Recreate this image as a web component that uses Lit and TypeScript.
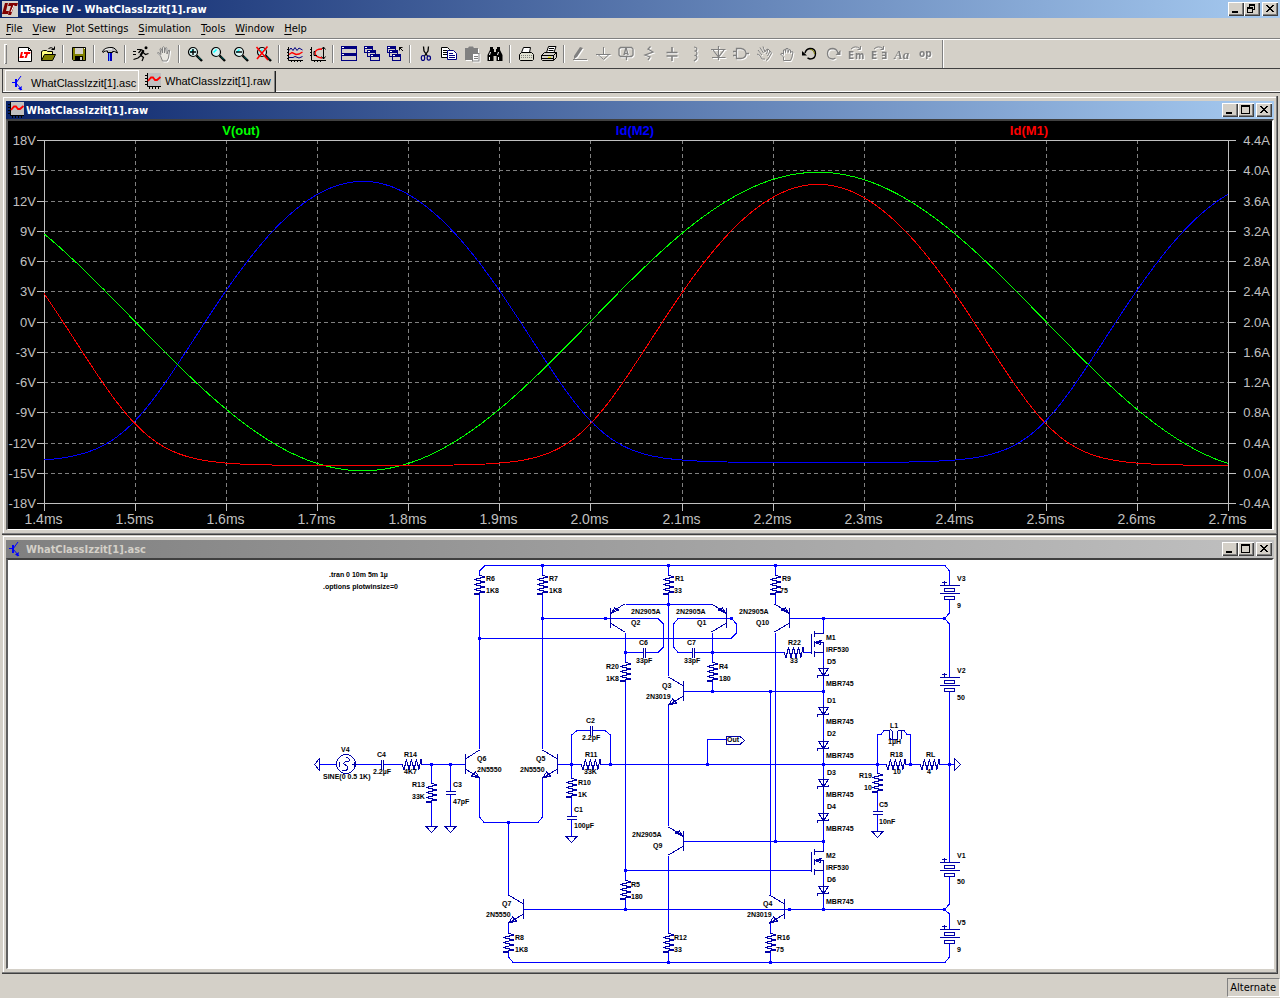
import { LitElement, html, svg, css, SVGTemplateResult } from "lit";
import { customElement, property } from "lit/decorators.js";
import { classMap } from "lit/directives/class-map.js";

type Pic = SVGTemplateResult;

/* ---------- icons, drawn on a 16 x 16 grid ---------- */

const lens = (extra: Pic) => svg`
  <circle cx="6" cy="6" r="4.5" fill="#d8f4f4" stroke="#000" stroke-width="1.2"/>
  <path d="M3.5 6.5 L6.5 3.5" stroke="#0ff" stroke-width="1.4" fill="none"/>
  <path d="M9.5 9.5 L15 15" stroke="#000" stroke-width="2.4" fill="none"/>
  <path d="M11 10.5 L14 13.5" stroke="#008080" stroke-width="1" fill="none"/>
  ${extra}`;

const pane = (x: number, y: number, w: number, h: number) => svg`
  <rect x=${x} y=${y} width=${w} height=${h} fill="#000080"/>
  <rect x=${x + 1} y=${y + 3} width=${w - 2} height=${h - 4} fill="#d4d0c8"/>
  <rect x=${x + 1} y=${y + 1} width="2" height="1" fill="#fff"/>`;

const ICONS: Record<string, Pic> = {
  lt: svg`
    <rect width="16" height="16" fill="#d4d0c8"/>
    <path d="M3 2 H6 L4 10 H7 L6 13 H0 Z M7 2 H16 L15 5 H12 L9 14 H6 L9 5 H6 Z" fill="#800000"/>
    <path d="M9 11 L12 4" stroke="#fff" fill="none"/>`,
  bjt: svg`
    <path d="M1 7.500 H5 M5 8 L10 1 M5 8 L11 15" stroke="#00f" stroke-width="1" fill="none"/>
    <path d="M10 15.500 L11 11 L7 13.500 Z M4 4 h2 v8 h-2 z" fill="#00f"/>`,
  wave: svg`
    <rect x="2" width="14" height="13" fill="#c0c0c0"/>
    <path d="M2.500 0 V13.500 H16 M0 2.500 h2 M0 5.500 h2 M0 8.500 h2 M0 11.500 h2 M4.500 14 v2 M7.500 14 v2 M10.500 14 v2 M13.500 14 v2" stroke="#000" fill="none"/>
    <path d="M3 8 L6 4.500 H8 L10 7 H12 L15.500 4" stroke="#f00" stroke-width="1.800" fill="none"/>`,
  fresh: svg`
    <path d="M1.500 1.500 H11.500 L14.500 4.500 V15.500 H1.500 Z" fill="#fff" stroke="#000"/>
    <path d="M11.500 1.500 V4.500 H14.500" fill="none" stroke="#000"/>
    <path d="M4 6 H6 L5 10 H7 L6.500 12 H2.500 Z M7 6 H13.500 L13 8 H11 L9.500 12 H7.500 L9 8 H7 Z" fill="#f00"/>`,
  open: svg`
    <path d="M1.500 14.500 V5.500 L3.500 4.500 H6.500 L7.500 5.500 H12.500 V8.500" fill="#ffff80" stroke="#000"/>
    <path d="M1.500 14.500 L4.500 8.500 H15.500 L12.500 14.500 Z" fill="#808000" stroke="#000"/>
    <path d="M8.500 2.500 Q11 0.500 14 3 M14.500 0.500 V3.500 H11.500" fill="none" stroke="#000"/>`,
  save: svg`
    <path d="M1.500 1.500 H14.500 V14.500 H2.500 L1.500 13.500 Z" fill="#808000" stroke="#000"/>
    <rect x="4" y="2" width="8" height="6" fill="#d4d0c8"/>
    <rect x="4" y="10" width="8" height="5" fill="#000"/>
    <rect x="9" y="11" width="2" height="3" fill="#d4d0c8"/>
    <rect x="13" y="2" width="1" height="1" fill="#fff"/>`,
  hammer: svg`
    <path d="M0.500 5 Q4 1 10 1.500 Q14 2 15.500 7 L12.500 5.500 H10.500 V6.500 H5.500 V5 H3 L1 6.500 Z" fill="#c0c0c0" stroke="#000"/>
    <path d="M3 4 Q6 2.500 10 3" stroke="#fff" fill="none"/>
    <rect x="6" y="7" width="4" height="8" fill="#0000c0"/>
    <rect x="7" y="7" width="1" height="8" fill="#60a0ff"/>`,
  run: svg`
    <circle cx="13" cy="1.800" r="1.500" fill="#000"/>
    <path d="M4 3.500 H8 L11 5 M9.500 6 L12.500 8.500 L15.500 7.500 M8 4 L5.500 7 M8 9.500 L5 12 L0.500 13.500 M8 9.500 L10.500 11.500 L9 15" fill="none" stroke="#000" stroke-width="1.200"/>
    <path d="M10.500 4.500 L7.500 9.500" stroke="#000" stroke-width="2.200"/>
    <path d="M0 5.500 h3 M0 8.500 h3" stroke="#000" fill="none"/>`,
  hand: svg`
    <path d="M4.500 10 L2 7.500 Q1 6.500 2.500 6.500 L5 8.500 L4 3 Q4.500 1.500 5.500 3 L6.500 7 V1.500 Q7.500 0 8.500 1.500 V7 L9.500 2 Q10.500 1 11 2.500 V8 L12.500 4 Q13.500 3.500 13.500 5 L12.500 12 L11 15 H6.500 Z" fill="#e8e6e0" stroke="#808080"/>`,
  zoomin: lens(svg`<path d="M6 3 V9 M3 6 H9" stroke="#000" stroke-width="1.400"/>`),
  pan: lens(svg``),
  zoomout: lens(svg`<path d="M3 6 H9" stroke="#000" stroke-width="1.400"/>`),
  zoomfit: lens(svg`<path d="M0.500 1 L12 14 M11.500 0.500 L1 13" stroke="#f00" stroke-width="1.600"/>`),
  plotx: svg`
    <path d="M1.500 1 V14.500 H16 M0 3.500 h2 M0 6.500 h2 M0 9.500 h2 M0 12.500 h2 M4.500 14 v2 M7.500 14 v2 M10.500 14 v2 M13.500 14 v2" stroke="#000" fill="none"/>
    <path d="M2 4.500 L4 2 L6 4.500 L8 1.500 L10 4.500 L12 2 L15.500 4" stroke="#000080" fill="none"/>
    <path d="M2 8.500 L5 6.500 L9 8.500 L12 8 L15.500 6" stroke="#f00" stroke-width="1.400" fill="none"/>
    <path d="M2 11.500 H6 L8 10.500 L12 12 L15.500 10.500" stroke="#000080" fill="none"/>`,
  ploty: svg`
    <path d="M1.500 1 V14.500 H16 M0 3.500 h2 M0 6.500 h2 M0 9.500 h2 M4.500 14 v2 M7.500 14 v2 M10.500 14 v2 M13.500 1 V13 M11.500 3.500 L13.500 1 L15.500 3.500 M11.500 10.500 L13.500 13 L15.500 10.500" stroke="#000" fill="none"/>
    <path d="M12 3 Q5 3 5 7 Q5 11 12 12" stroke="#f00" stroke-width="1.300" fill="none"/>
    <path d="M5 5.500 h-1 v4 h3" stroke="#000" fill="none"/>`,
  tile: svg`${pane(0, 0, 16, 8)}${pane(0, 7, 16, 8)}`,
  cascade: svg`${pane(0, 0, 9, 7)}${pane(3, 4, 9, 7)}${pane(6, 8, 10, 7)}`,
  closeall: svg`${pane(0, 0, 9, 7)}${pane(2, 4, 9, 7)}${pane(5, 8, 9, 7)}
    <path d="M12 1.500 H15.500 M12.500 1 V4.500 M12.500 1.500 L16 5" stroke="#000" fill="none"/>`,
  cut: svg`
    <path d="M5.500 0.500 L6 5 L9.500 10 M10.500 0.500 L10 5 L6.500 10" stroke="#000" stroke-width="1.300" fill="none"/>
    <ellipse cx="5" cy="12" rx="1.700" ry="2.500" fill="none" stroke="#000080" stroke-width="1.200"/>
    <ellipse cx="10.800" cy="12" rx="1.700" ry="2.200" fill="none" stroke="#000080" stroke-width="1.200"/>`,
  copy: svg`
    <path d="M0.500 1.500 H6.500 L8.500 3.500 V11.500 H0.500 Z" fill="#fff" stroke="#000"/>
    <path d="M2 4.500 h4 M2 6.500 h5 M2 8.500 h5" stroke="#000"/>
    <path d="M6.500 4.500 H12.500 L15.500 7.500 V13.500 H6.500 Z" fill="#fff" stroke="#000080"/>
    <path d="M8 7.500 h4 M8 9.500 h6 M8 11.500 h6" stroke="#000080"/>`,
  paste: svg`
    <path d="M1 2 H4 L5 0.500 H9 L10 2 H14 V8 H8 V14 H1 Z" fill="#808080"/>
    <rect x="8.500" y="7.500" width="6.500" height="7.500" fill="#fff" stroke="#808080"/>
    <path d="M10 10.500 h4 M10 12.500 h4" stroke="#808080"/>`,
  find: svg`
    <path d="M3 1 H6 V3 H7 V6 H9 V3 H10 V1 H13 V4 L15.500 9 V15 H9.500 V10 H6.500 V15 H0.500 V9 L3 4 Z" fill="#000"/>
    <path d="M3.500 6 L2.500 9 M11.500 6 L10.500 9 M2.500 11 v3 M11.500 11 v3" stroke="#fff" fill="none"/>`,
  setup: svg`
    <path d="M3.500 6.500 L5.500 1.500 H12.500 L11.500 6.500 Z" fill="#fff" stroke="#000"/>
    <path d="M1.500 8.500 L3.500 6.500 H13.500 L15.500 8.500 V13.500 L14.500 14.500 H2.500 L1.500 13.500 Z" fill="#e0e0d0" stroke="#000"/>
    <path d="M3 9.500 H14 M3 11.500 H14" stroke="#808080" stroke-dasharray="1 1"/>`,
  print: svg`
    <path d="M5.500 6.500 L7.500 0.500 H15 L13 6.500 Z" fill="#fff" stroke="#000"/>
    <path d="M8 2.500 h5 M7.500 4.500 h5" stroke="#000"/>
    <path d="M0.500 9.500 L3.500 6.500 H15.500 L12.500 9.500 Z M0.500 9.500 H12.500 V14.500 H1.500 L0.500 13.500 Z M12.500 9.500 L15.500 6.500 V11.500 L12.500 14.500" fill="#d4d0c8" stroke="#000"/>
    <path d="M7 11.500 h3" stroke="#e0e000" stroke-width="1.400"/>
    <path d="M1 12.500 h11" stroke="#000"/>`,
  pencil: svg`
    <path d="M8 1 L11 2 L5 11 L2 13 V10 Z" fill="#808080"/>
    <path d="M1 13.500 H15" stroke="#808080"/>`,
  ground: svg`<path d="M8.500 1 V8 M1 8.500 H15.500 M3 8.500 L8.500 13.500 L14 8.500" fill="none" stroke="#808080"/>`,
  label: svg`
    <path d="M2.500 1.500 H13.500 L15 3 V9 L13.500 10.500 H2.500 L1 9 V3 Z M8.500 11 V14" fill="none" stroke="#808080" stroke-width="1.300"/>
    <text x="8" y="9" text-anchor="middle" class="glyph g8">A</text>`,
  resistor: svg`<path d="M9.500 0.500 L7 3 L12 6 L4 9 L9 11 L7 14" fill="none" stroke="#808080" stroke-width="1.300"/>`,
  cap: svg`<path d="M8 1 V6 M8 10 V15 M2.500 6.500 H13.500 M2.500 10 H13.500" fill="none" stroke="#808080" stroke-width="1.600"/>`,
  coil: svg`<path d="M7 1 Q11 1.500 9.500 4.500 L7.500 5 Q11 5.500 9.500 9 L7.500 9.500 Q11 10 9.500 13 L7 15" fill="none" stroke="#808080" stroke-width="1.200"/>`,
  diode: svg`<path d="M8.500 0 V14 M1 3.500 H15.500 M3 4 L8.500 11 L14 4 M2 11.500 H15.500" fill="none" stroke="#808080" stroke-width="1.200"/>`,
  gate: svg`<path d="M3.500 2.500 H8 Q13 3.500 13 7.500 Q13 12 8 12.500 H3.500 Z M0 5.500 H3 M0 9.500 H3 M13 7.500 H16" fill="none" stroke="#808080" stroke-width="1.300"/>`,
  move: svg`
    <path d="M2 4 L6 9 M4 1.500 L7.500 7 M7 0.500 L9 6 M1 8 L4 9.500 L6 13 H9 M9 6 L10 4 L12 3 L10.500 8 M12 3 L14 5 L11.500 10 M14 5 L15.500 7 L12 13 L10 14.500" fill="none" stroke="#808080" stroke-width="1"/>`,
  drag: svg`
    <path d="M4.500 14.500 V11 L1.500 8 L3 7 L4.500 8.500 V4 L6.500 3.500 V6.500 L7 2.500 L9 2.500 V6.500 L10 3.500 L11.500 4 V7 L12.500 5.500 L14 6 L13 11 L11.500 14.500 Z" fill="none" stroke="#808080" stroke-width="1"/>`,
  undo: svg`
    <path d="M3 7 Q4 3 8 2.500 Q13.500 2.500 13.500 7.500 Q13.500 13 8 13 L5.500 12" fill="none" stroke="#000" stroke-width="1.400"/>
    <path d="M8 3.500 Q12 3.500 12.500 8" fill="none" stroke="#808000"/>
    <path d="M0 5 V9.500 H5 Z" fill="#000"/>`,
  redo: svg`
    <path d="M13 7 Q12 3 8 2.500 Q2.500 2.500 2.500 7.500 Q2.500 13 8 13 L10.500 12" fill="none" stroke="#808080" stroke-width="1.300"/>
    <path d="M15.500 4 V9 H10.500 Z" fill="#808080"/>`,
  rotate: svg`
    <path d="M3 3 Q7 -1 12 2.500 M12.500 0 V3.500 H9.500" fill="none" stroke="#808080"/>
    <text x="0" y="13" class="glyph g10">E</text>
    <text x="7" y="13" class="glyph g10">m</text>`,
  mirror: svg`
    <path d="M3 3 Q7 -1 12 2.500 M12.500 0 V3.500 H9.500" fill="none" stroke="#808080"/>
    <text x="0" y="13" class="glyph g10">E</text>
    <text x="10" y="13" class="glyph g10">∃</text>`,
  text: svg`<text x="0" y="13" class="glyph script">Aa</text>`,
  op: svg`<text x="2" y="11" class="glyph g10">op</text>`,
};

const icon = (name: string) =>
  html`<svg class="icon" viewBox="0 0 16 16" aria-hidden="true">${ICONS[name]}</svg>`;

const iconStyles = css`
  .icon { width: 16px; height: 16px; display: block; flex: none; overflow: visible; }
  .glyph { fill: #808080; font-family: "DejaVu Sans Condensed", "Liberation Sans", sans-serif; }
  .g8 { font-size: 8px; font-weight: bold; }
  .g10 { font-size: 10px; font-weight: bold; }
  .script { font: italic bold 13px "Liberation Serif", serif; }
`;

/* ---------- caption buttons ---------- */

@customElement("caption-buttons")
export class CaptionButtons extends LitElement {
  @property() middle: "max" | "restore" = "max";

  static styles = css`
    :host { display: flex; flex: none; }
    button {
      width: 16px; height: 14px; padding: 0; border: 0; background: #d4d0c8;
      box-shadow: inset 1px 1px #fff, inset -1px -1px #404040, inset -2px -2px #808080;
    }
    .close { margin-left: 2px; }
    svg { display: block; width: 16px; height: 14px; shape-rendering: crispEdges; }
  `;

  render() {
    return html`
      <button aria-label="Minimize"><svg viewBox="0 0 16 14"><path d="M4 9h6v2h-6z"/></svg></button>
      <button aria-label=${this.middle === "max" ? "Maximize" : "Restore"}>
        <svg viewBox="0 0 16 14">
          ${this.middle === "max"
            ? svg`<path d="M3 2h9v9h-9z M4 4v6h7v-6z" fill-rule="evenodd"/>`
            : svg`<path d="M5 2h6v6h-2v3h-6v-6h2z M6 4v1h3v2h1v-3z M4 7v3h4v-3z" fill-rule="evenodd"/>`}
        </svg>
      </button>
      <button class="close" aria-label="Close">
        <svg viewBox="0 0 16 14"><path d="M4 3h2v1h1v1h2v-1h1v-1h2v1h-1v1h-1v1h-1v1h1v1h1v1h1v1h-2v-1h-1v-1h-2v1h-1v1h-2v-1h1v-1h1v-1h1v-1h-1v-1h-1v-1h-1z"/></svg>
      </button>`;
  }
}

/* ---------- waveform plot ---------- */

const X0 = 44, X1 = 1228, Y0 = 140, Y1 = 503;
const T0 = 1.4, T1 = 2.7;
const xOf = (t: number) => X0 + ((t - T0) / (T1 - T0)) * (X1 - X0);
const yVolt = (v: number) => Y0 + ((18 - v) / 36) * (Y1 - Y0);
const yAmp = (a: number) => Y0 + ((4.4 - a) / 4.8) * (Y1 - Y0);

const output = (t: number) => 14.8 * Math.sin(2 * Math.PI * (t - 2));
const drain = (s: number, base: number) =>
  base + 3.55 * 0.19 * Math.log(1 + Math.exp((s + 0.048) / 0.19));

function trace(f: (t: number) => number): string {
  const points: string[] = [];
  for (let i = 0; i <= 260; i++) {
    const t = T0 + (i / 260) * (T1 - T0);
    points.push(`${xOf(t).toFixed(1)},${f(t).toFixed(1)}`);
  }
  return points.join(" ");
}

@customElement("wave-plot")
export class WavePlot extends LitElement {
  static styles = css`
    :host { display: block; background: #000; min-height: 0; }
    svg { display: block; width: 100%; height: 100%; }
    .axis { stroke: #c0c0c0; fill: none; shape-rendering: crispEdges; }
    .grid { stroke: #808080; stroke-dasharray: 4 3; fill: none; shape-rendering: crispEdges; }
    .trace { fill: none; stroke-width: 1; shape-rendering: crispEdges; }
    text { font-family: "Liberation Sans", sans-serif; font-size: 13px; fill: #c0c0c0; }
    .name { font-weight: bold; text-anchor: middle; }
    .green { stroke: #0f0; } .blue { stroke: #00f; } .red { stroke: #f00; }
    .tgreen { fill: #0f0; } .tblue { fill: #00f; } .tred { fill: #f00; }
    .end { text-anchor: end; }
    .mid { text-anchor: middle; font-size: 14px; }
  `;

  render() {
    const cols = Array.from({ length: 14 }, (_, i) => i);
    const rows = Array.from({ length: 13 }, (_, i) => i);
    return html`
      <svg viewBox="8 121 1264 408" role="img" aria-label="Waveforms">
        ${cols.map((i) => {
          const x = Math.round(xOf(T0 + i / 10)) + 0.5;
          return svg`
            ${i > 0 && i < 13 ? svg`<path class="grid" d="M${x} ${Y0} V${Y1}"/>` : ""}
            <path class="axis" d="M${x} ${Y1} v8"/>
            <text class="mid" x=${x - 1} y="524">${(T0 + i / 10).toFixed(1)}ms</text>`;
        })}
        ${rows.map((i) => {
          const y = Math.round(Y0 + i * 30.25) + 0.5;
          return svg`
            ${i > 0 && i < 12 ? svg`<path class="grid" d="M${X0} ${y} H${X1}"/>` : ""}
            <path class="axis" d="M37 ${y} H${X0} M${X1} ${y} h8"/>
            <text class="end" x="36" y=${y + 4.5}>${18 - 3 * i}V</text>
            <text class="end" x="1270" y=${y + 4.5}>${(4.4 - 0.4 * i).toFixed(1)}A</text>`;
        })}
        <rect class="axis" x="44.5" y="140.5" width="1184" height="363"/>
        <polyline class="trace blue" points=${trace((t) => yAmp(drain(-Math.sin(2 * Math.PI * (t - 2)), 0.13)))}/>
        <polyline class="trace green" points=${trace((t) => yVolt(output(t)))}/>
        <polyline class="trace red" points=${trace((t) => yAmp(drain(Math.sin(2 * Math.PI * (t - 2)), 0.09)))}/>
        <text class="name tgreen" x="241" y="135">V(out)</text>
        <text class="name tblue" x="635" y="135">Id(M2)</text>
        <text class="name tred" x="1029" y="135">Id(M1)</text>
      </svg>`;
  }
}

/* ---------- schematic ---------- */

const WIRES = [
  "M479.5 575 V571 L485 565.5 H945 L949.5 571 V585",
  "M542.5 565 V575 M668.5 565 V575 M775.5 565 V575",
  "M479.5 595 V749 M542.5 595 V749 M668.5 595 V676 M775.5 595 V604",
  "M542.5 618.5 H658 L663.5 624 V647 L658 652.5 H646",
  "M479.5 638.5 H731 L736.5 633 V624 L731.5 618.5 H678 L673.5 624 V647 L678 652.5 H692",
  "M625.5 604.5 H712.5 M625.5 633 V662 M625.5 652.5 H643",
  "M625.5 682 V880 M625.5 900 V909",
  "M712.5 633 V662 M712.5 682 V691 M695 652.5 H784 M804 652.5 H811",
  "M684 691.5 H823.5 M668.5 705 V826 M684 841.5 H823.5 M668.5 856 V933 M668.5 953 V962",
  "M775.5 633 V841 M770.5 691 V895 M770.5 923 V933 M770.5 953 V962",
  "M790 618.5 H944.5 L949.5 624 V677 M949.5 599 V613 L944.5 618.5",
  "M823.5 618 V633 M823.5 652 V851 M823.5 870 V909",
  "M625.5 870.5 H811",
  "M320 764.5 H336 M356 764.5 H381 M384 764.5 H402 M422 764.5 H465",
  "M431.5 764 V783 M431.5 803 V826 M450.5 764 V791 M450.5 795 V826",
  "M479.5 778 V817 L484 822.5 H538 L542.5 817 V778 M508.5 822 V895",
  "M557 764.5 H581 M601 764.5 H886 M906 764.5 H920 M940 764.5 H954",
  "M571.5 764 V735 L577 730.5 H590 M593 730.5 H605 L610.5 735 V764",
  "M571.5 764 V778 M571.5 798 V816 M571.5 819 V836",
  "M707.5 764 V739.5 H726",
  "M877.5 773 V734.5 H881 L884 730.5 M910.5 764 V734.5 H907 L904 730.5",
  "M877.5 793 V811 M877.5 814 V831",
  "M949.5 691 V862 M949.5 876 V904 L944.5 909.5 L949.5 914 V929",
  "M524 909.5 H944.5 M508.5 923 V933",
  "M508.5 953 V957 L513 962.5 H945 L949.5 957 V943",
];

const JUNCTIONS = [
  [542, 565], [668, 565], [775, 565], [668, 604], [542, 618], [605, 618], [731, 618], [823, 618],
  [944, 618], [479, 638], [625, 652], [712, 652], [712, 691], [770, 691], [823, 691],
  [431, 764], [450, 764], [571, 764], [610, 764], [707, 764], [823, 764], [877, 764], [910, 764], [949, 764],
  [508, 822], [775, 841], [823, 841], [625, 870], [625, 909], [789, 909], [823, 909], [944, 909],
  [668, 962], [770, 962],
];

const resistorV = (x: number, y: number) =>
  `M${x} ${y} l5 2 l-10 2.500 l10 2.500 l-10 2.500 l10 2.500 l-10 2.500 l10 2.500 l-10 2 l5 1`;
const resistorH = (x: number, y: number) =>
  `M${x} ${y} l2 5 l2.500 -10 l2.500 10 l2.500 -10 l2.500 10 l2.500 -10 l2.500 10 l2 -10 l1 5`;
const capH = (x: number, y: number) => `M${x} ${y - 5} v10 M${x + 2} ${y - 5} v10`;
const capV = (x: number, y: number) => `M${x - 5} ${y} h10 M${x - 5} ${y + 3} h10`;
const groundAt = (x: number, y: number) => `M${x - 5.5} ${y} h11 l-5.500 6 z`;
const diodeAt = (y: number) =>
  `M818.5 ${y} h10 l-5 7 z M817.5 ${y + 9} v-2 h11 v-2 M823.5 ${y - 3} v13`;
const batteryAt = (y: number) =>
  `M940 ${y} h20 M944.5 ${y + 3} h10 v3 h-10 z M940 ${y + 8} h20 M944.5 ${y + 11} h10 v3 h-10 z M942 ${y - 3} h5 M944.5 ${y - 5} v5`;
const fetAt = (y: number) =>
  `M811.5 ${y} v20 M814.5 ${y - 3} v6 M814.5 ${y + 7} v6 M814.5 ${y + 17} v6 M814 ${y} h9.500 v-2 M814 ${y + 19} h9.500 M815 ${y + 9} l6 -2 l-1 4 z M815 ${y + 9} h8.500 v10`;
/* dir: side of the collector and emitter leads; pnp swaps arrow direction, up puts the emitter on top */
const bjtAt = (bx: number, by: number, dir: 1 | -1, pnp: boolean, up: boolean) => {
  const w = dir === 1 ? 14 : 15;
  const ex = bx + dir * w;
  const s = up ? -1 : 1;
  const head = pnp
    ? `M${bx + dir} ${by + s * 5} l${dir * 3} ${s * 5} l${dir * 4} ${s * -2} z`
    : `M${ex} ${by + s * 14} l${dir * -8} ${s * -2} l${dir * 4} ${s * -4} z`;
  return `M${bx} ${by - 10} v20 M${bx} ${by - 5} L${ex} ${by - 14} M${bx} ${by + 5} L${ex} ${by + 14} ${head}`;
};

const SYMBOLS = [
  resistorV(479.5, 575), resistorV(542.5, 575), resistorV(668.5, 575), resistorV(775.5, 575),
  resistorV(625.5, 662), resistorV(712.5, 662), resistorV(431.5, 783), resistorV(571.5, 778),
  resistorV(877.5, 773), resistorV(625.5, 880), resistorV(508.5, 933), resistorV(668.5, 933), resistorV(770.5, 933),
  resistorH(402, 764.5), resistorH(581, 764.5), resistorH(784, 652.5), resistorH(886, 764.5), resistorH(920, 764.5),
  capH(381.5, 764.5), capH(643.5, 652.5), capH(692.5, 652.5), capH(590.5, 730.5),
  capV(450.5, 791.5), capV(571.5, 816.5), capV(877.5, 811.5),
  groundAt(431.5, 826.5), groundAt(450.5, 826.5), groundAt(571.5, 836.5), groundAt(877.5, 831.5),
  diodeAt(668.5), diodeAt(707.5), diodeAt(741.5), diodeAt(779.5), diodeAt(813.5), diodeAt(886.5),
  batteryAt(585.5), batteryAt(677.5), batteryAt(862.5), batteryAt(929.5),
  fetAt(633.5), fetAt(851.5),
  bjtAt(465.5, 764, 1, false, false), bjtAt(557.5, 764, -1, false, false), bjtAt(523.5, 909, -1, false, false),
  bjtAt(784.5, 909, -1, false, false), bjtAt(683.5, 691, -1, false, false),
  bjtAt(610.5, 618, 1, true, true), bjtAt(726.5, 618, -1, true, true), bjtAt(789.5, 618, -1, true, true),
  bjtAt(683.5, 841, -1, true, true),
  "M314.5 764.5 L319.5 758.5 V770.5 Z M960.5 764.5 L954.5 758.5 V770.5 Z",
  "M726 736.500 H740 L744.500 740.500 L740 744.500 H726 Z",
  "M884 730.5 H889 M889 730.5 v8 l3 1 v-8 M889 730.5 q3 -2 4 3 M893 739 l4 0 v-8 M897 733 q1 -4 4 -2 v8 M901 730.5 H904",
  "M342 770 l3 1 q4 -2 2 -5 l-3 -2 q-1 -2 5 -3 q1 -3 -3 -4 M339.5 762 v5 M352 764.5 h5 M354.500 762 v5",
];

const LABELS: [number, number, string][] = [
  [329, 577, ".tran 0 10m 5m 1µ"], [323, 589, ".options plotwinsize=0"],
  [486, 581, "R6"], [486, 593, "1K8"], [549, 581, "R7"], [549, 593, "1K8"],
  [675, 581, "R1"], [674, 593, "33"], [782, 581, "R9"], [780, 593, "75"],
  [631, 614, "2N2905A"], [631, 625, "Q2"], [676, 614, "2N2905A"], [697, 625, "Q1"],
  [739, 614, "2N2905A"], [756, 625, "Q10"],
  [639, 645, "C6"], [636, 663, "33pF"], [687, 645, "C7"], [684, 663, "33pF"],
  [606, 669, "R20"], [606, 681, "1K8"], [719, 669, "R4"], [719, 681, "180"],
  [662, 688, "Q3"], [646, 699, "2N3019"], [788, 645, "R22"], [790, 663, "33"],
  [826, 640, "M1"], [826, 652, "IRF530"], [827, 664, "D5"], [826, 686, "MBR745"],
  [827, 703, "D1"], [826, 724, "MBR745"], [827, 736, "D2"], [826, 758, "MBR745"],
  [827, 775, "D3"], [826, 797, "MBR745"], [827, 809, "D4"], [826, 831, "MBR745"],
  [826, 858, "M2"], [826, 870, "IRF530"], [827, 882, "D6"], [826, 904, "MBR745"],
  [957, 581, "V3"], [957, 608, "9"], [957, 673, "V2"], [957, 700, "50"],
  [957, 858, "V1"], [957, 884, "50"], [957, 925, "V5"], [957, 952, "9"],
  [341, 752, "V4"], [323, 779, "SINE(0 0.5 1K)"], [377, 757, "C4"], [373, 774, "2.2µF"],
  [404, 757, "R14"], [404, 774, "4K7"], [412, 787, "R13"], [412, 799, "33K"],
  [453, 787, "C3"], [453, 804, "47pF"], [477, 761, "Q6"], [477, 772, "2N5550"],
  [536, 761, "Q5"], [520, 772, "2N5550"], [586, 723, "C2"], [582, 740, "2.2pF"],
  [585, 757, "R11"], [584, 774, "33K"], [578, 785, "R10"], [578, 797, "1K"],
  [574, 812, "C1"], [574, 828, "100µF"], [727, 742, "Out"],
  [890, 728, "L1"], [888, 744, "1µH"], [890, 757, "R18"], [893, 774, "10"],
  [926, 757, "RL"], [927, 774, "4"], [859, 778, "R19"], [864, 790, "10"],
  [879, 807, "C5"], [879, 824, "10nF"],
  [632, 837, "2N2905A"], [653, 848, "Q9"], [631, 887, "R5"], [631, 899, "180"],
  [502, 906, "Q7"], [486, 917, "2N5550"], [515, 940, "R8"], [515, 952, "1K8"],
  [674, 940, "R12"], [674, 952, "33"], [763, 906, "Q4"], [747, 917, "2N3019"],
  [777, 940, "R16"], [776, 952, "75"],
];

@customElement("schematic-sheet")
export class SchematicSheet extends LitElement {
  static styles = css`
    :host { display: block; background: #fff; min-height: 0; }
    svg { display: block; width: 100%; height: 100%; shape-rendering: crispEdges; }
    .wire { stroke: #00f; fill: none; }
    .part { stroke: #0000a8; fill: none; }
    .dot { fill: #00f; }
    text { font: bold 7px "Liberation Sans", sans-serif; fill: #000; }
  `;

  render() {
    return html`
      <svg viewBox="8 560 1264 408" role="img" aria-label="Schematic">
        <path class="wire" d=${WIRES.join(" ")}/>
        <path class="part" d=${SYMBOLS.join(" ")}/>
        <circle class="part" cx="346" cy="764" r="9.500"/>
        ${JUNCTIONS.map(([x, y]) => svg`<rect class="dot" x=${x - 1} y=${y - 1} width="3" height="3"/>`)}
        ${LABELS.map(([x, y, s]) => svg`<text x=${x} y=${y}>${s}</text>`)}
      </svg>`;
  }
}

/* ---------- document window ---------- */

@customElement("doc-window")
export class DocWindow extends LitElement {
  @property() heading = "";
  @property() glyph = "wave";
  @property({ type: Boolean }) active = false;

  static styles = [iconStyles, css`
    :host {
      display: flex; flex-direction: column; box-sizing: border-box; min-height: 0;
      padding: 5px 4px; background: #d4d0c8;
      box-shadow: inset -1px -1px #404040, inset -2px -2px #808080, inset 1px 1px #d4d0c8, inset 2px 2px #fff;
    }
    .bar {
      display: flex; align-items: center; gap: 2px; height: 18px; padding: 0 2px;
      background: linear-gradient(to right, #808080, #c0c0c0); color: #d4d0c8;
    }
    .bar.active { background: linear-gradient(to right, #0a246a, #a6caf0); color: #fff; }
    h2 { flex: 1; margin: 0; padding-top: 2px; font-size: 11px; font-weight: bold; line-height: 18px; white-space: nowrap; overflow: hidden; }
    .client {
      flex: 1; min-height: 0; display: grid; grid-template: minmax(0, 1fr) / minmax(0, 1fr);
      border-style: solid; border-width: 2px 2px 1px; border-color: #404040 #fff #fff #606060;
    }
  `];

  render() {
    return html`
      <div class=${classMap({ bar: true, active: this.active })}>
        ${icon(this.glyph)}
        <h2>${this.heading}</h2>
        <caption-buttons></caption-buttons>
      </div>
      <div class="client"><slot></slot></div>`;
  }
}

/* ---------- application frame ---------- */

const MENUS = ["File", "View", "Plot Settings", "Simulation", "Tools", "Window", "Help"];

const TOOLS: [string, string, boolean][][] = [
  [["fresh", "New Schematic", true], ["open", "Open", true]],
  [["save", "Save", true]],
  [["hammer", "Control Panel", true]],
  [["run", "Run", true], ["hand", "Halt", false]],
  [["zoomin", "Zoom In", true], ["pan", "Pan", true], ["zoomout", "Zoom Out", true], ["zoomfit", "Zoom to Fit", true]],
  [["plotx", "Autorange", true], ["ploty", "Plot Settings", true]],
  [["tile", "Tile Windows", true], ["cascade", "Cascade Windows", true], ["closeall", "Close Windows", true]],
  [["cut", "Cut", true], ["copy", "Copy", true], ["paste", "Paste", false], ["find", "Find", true]],
  [["setup", "Print Setup", true], ["print", "Print", true]],
  [["pencil", "Wire", false], ["ground", "Ground", false], ["label", "Label Net", false], ["resistor", "Resistor", false],
   ["cap", "Capacitor", false], ["coil", "Inductor", false], ["diode", "Diode", false], ["gate", "Component", false],
   ["move", "Move", false], ["drag", "Drag", false], ["undo", "Undo", true], ["redo", "Redo", false],
   ["rotate", "Rotate", false], ["mirror", "Mirror", false], ["text", "Text", false], ["op", "SPICE Directive", false]],
];

@customElement("app-root")
export class AppRoot extends LitElement {
  static styles = [iconStyles, css`
    :host {
      display: flex; flex-direction: column; height: 100vh; background: #d4d0c8; color: #000;
      font-family: "DejaVu Sans Condensed", "Liberation Sans", sans-serif; font-size: 11px; line-height: 14px;
    }
    button { font: inherit; color: inherit; background: none; border: 0; padding: 0; }
    .title {
      flex: none; display: flex; align-items: center; gap: 2px; height: 18px; padding: 0 2px;
      background: linear-gradient(to right, #0a246a, #a6caf0); color: #fff;
    }
    h1 { flex: 1; margin: 0; padding-top: 2px; font-size: 11px; line-height: 18px; }
    .menu { flex: none; display: flex; height: 20px; padding: 0 1px; border-bottom: 1px solid #808080; }
    .menu button { padding: 0 5px; line-height: 22px; }
    .menu u { text-underline-offset: 2px; }
    .tools {
      flex: none; display: flex; align-items: center; height: 28px; padding-left: 4px;
      border-top: 1px solid #fff; border-bottom: 1px solid #404040;
    }
    .grip { width: 3px; height: 20px; margin-right: 6px; box-shadow: inset 1px 1px #fff, inset -1px -1px #808080; }
    .group { display: flex; }
    .group + .group::before {
      content: ""; width: 0; height: 18px; margin: 2px 3px; border-left: 1px solid #808080; border-right: 1px solid #fff;
    }
    .group button { width: 23px; height: 22px; display: grid; place-items: center; }
    .group button:disabled .icon { filter: drop-shadow(1px 1px 0 #fff); }
    .stop { width: 1px; align-self: stretch; margin-left: 6px; background: #808080; border-right: 1px solid #fff; }
    .tabs {
      flex: none; display: flex; height: 22px; margin-left: 2px; padding: 1px 0 0 2px;
      border-left: 1px solid #404040; border-bottom: 1px solid #404040;
      box-shadow: inset 0 -1px #fff;
      font-family: "Liberation Sans", sans-serif;
    }
    .tab {
      display: flex; align-items: center; gap: 4px; box-sizing: border-box; width: 134px; padding: 3px 4px 0 6px;
      white-space: nowrap; box-shadow: inset 1px 1px #fff, inset -1px -1px #fff;
    }
    .tab.on {
      width: 137px; padding: 0 6px 1px; background: #d4d0c8;
      box-shadow: inset 0 1px #d4d0c8, inset -1px 0 #202020, inset -2px 0 #808080;
    }
    .desk { flex: 1; min-height: 0; display: grid; grid-template-rows: minmax(0, 1fr) minmax(0, 1fr); padding: 3px 2px 0; }
    .status { flex: none; display: flex; justify-content: flex-end; height: 24px; box-sizing: border-box; padding: 4px 0 1px; }
    .cell { padding: 0 3px 0 2px; line-height: 17px; border: 1px solid; border-color: #808080 #fff #fff #808080; }
  `];

  render() {
    return html`
      <header class="title">
        ${icon("lt")}
        <h1>LTspice IV - WhatClassIzzit[1].raw</h1>
        <caption-buttons middle="restore"></caption-buttons>
      </header>
      <nav class="menu">
        ${MENUS.map((m) => html`<button><u>${m[0]}</u>${m.slice(1)}</button>`)}
      </nav>
      <div class="tools" role="toolbar">
        <span class="grip"></span>
        ${TOOLS.map((group) => html`<div class="group">${group.map(([name, tip, on]) =>
          html`<button aria-label=${tip} ?disabled=${!on}>${icon(name)}</button>`)}</div>`)}
        <span class="stop"></span>
      </div>
      <div class="tabs" role="tablist">
        <button class="tab" role="tab">${icon("bjt")}WhatClassIzzit[1].asc</button>
        <button class="tab on" role="tab" aria-selected="true">${icon("wave")}WhatClassIzzit[1].raw</button>
      </div>
      <main class="desk">
        <doc-window heading="WhatClassIzzit[1].raw" glyph="wave" active><wave-plot></wave-plot></doc-window>
        <doc-window heading="WhatClassIzzit[1].asc" glyph="bjt"><schematic-sheet></schematic-sheet></doc-window>
      </main>
      <footer class="status"><span class="cell">Alternate</span></footer>`;
  }
}
